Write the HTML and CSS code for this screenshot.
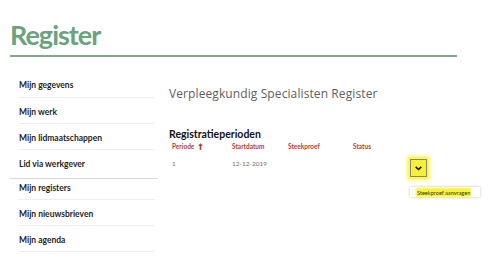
FILE: index.html
```html
<!DOCTYPE html>
<html lang="nl">
<head>
<meta charset="utf-8">
<title>Register</title>
<link rel="stylesheet" href="styles.css">
</head>
<body>
<header class="page-header">
  <h1 class="page-title">Register</h1>
</header>
<div class="layout">
  <nav class="sidebar">
    <a class="nav-item nav-item-first">Mijn gegevens</a>
    <a class="nav-item">Mijn werk</a>
    <a class="nav-item">Mijn lidmaatschappen</a>
    <a class="nav-item nav-item-tall">Lid via werkgever</a>
    <a class="nav-item nav-item-active">Mijn registers</a>
    <a class="nav-item">Mijn nieuwsbrieven</a>
    <a class="nav-item">Mijn agenda</a>
  </nav>
  <main class="content">
    <h2 class="register-name">Verpleegkundig Specialisten Register</h2>
    <h3 class="section-title">Registratieperioden</h3>
    <div class="table">
      <div class="row head">
        <div class="col c1">Periode <svg class="sort" viewBox="0 0 6 8" width="5" height="7"><path d="M3 0 L6 3.2 H4 V8 H2 V3.2 H0 Z" fill="#c0392b"/></svg></div>
        <div class="col c2">Startdatum</div>
        <div class="col c3">Steekproef</div>
        <div class="col c4">Status</div>
      </div>
      <div class="row body">
        <div class="col c1 num">1</div>
        <div class="col c2 date">12-12-2019</div>
        <div class="col c3"></div>
        <div class="col c4"></div>
        <div class="col c5">
          <div class="action">
            <button class="toggle" type="button">
              <svg viewBox="0 0 10 7" width="7" height="5"><path d="M1 1.2 L5 5 L9 1.2" fill="none" stroke="#111" stroke-width="2.2"/></svg>
            </button>
            <div class="menu"><span class="menu-item">Steekproef aanvragen</span></div>
          </div>
        </div>
      </div>
    </div>
  </main>
</div>
</body>
</html>
```

FILE: styles.css
```css
* { box-sizing: border-box; }
html, body { margin: 0; padding: 0; background: #fff; }
body {
  width: 500px;
  height: 259px;
  overflow: hidden;
  font-family: Lato, "Open Sans", sans-serif;
  color: #222;
}
.page-header {
  margin: 0 43px 0 10px;
  padding-top: 18px;
  border-bottom: 2px solid #7da98a;
  height: 57px;
}
.page-title {
  margin: 0;
  font-family: Lato, sans-serif;
  font-weight: 700;
  font-size: 27px;
  line-height: 34px;
  color: #6ba37d;
  letter-spacing: -1px;
}
.layout {
  display: flex;
  margin-top: 15px;
}
.sidebar {
  width: 149px;
  margin-left: 9px;
  display: flex;
  flex-direction: column;
}
.nav-item {
  display: flex;
  align-items: center;
  height: 26px;
  margin: 0 3px 0 10px;
  padding-top: 3px;
  border-bottom: 1px solid #eeeeee;
  font-size: 8.5px;
  font-weight: 700;
  color: #1e1e1e;
}
.nav-item-first { padding-top: 0; }
.nav-item-tall {
  height: 29px;
  margin: 0;
  padding: 0 0 0 10px;
  border-bottom: 1px solid #d8d8d8;
}
.nav-item-active { height: 21px; padding: 0 0 2px; }
.content {
  flex: 1;
  padding-left: 11px;
}
.register-name {
  margin: 14px 0 0;
  font-family: "Open Sans", sans-serif;
  font-weight: 400;
  font-size: 12px;
  line-height: 16px;
  color: #5e5e5e;
  letter-spacing: 0.1px;
}
.section-title {
  margin: 26px 0 0;
  font-size: 10.5px;
  line-height: 13px;
  font-weight: 700;
  color: #111;
}
.table { margin-top: 0; }
.row {
  display: flex;
  align-items: center;
  font-size: 6.5px;
}
.row.head { height: 10px; color: #c0392b; font-weight: 700; }
.row.body { height: 24px; }
.num { color: #b5574a; }
.date { color: #7b6a66; }
.col { padding-left: 3px; }
.c1 { width: 60px; display: flex; align-items: center; gap: 4px; }
.c2 { width: 56px; }
.c3 { width: 65px; }
.c4 { width: 57px; }
.c5 { flex: 1; }
.sort { display: block; }
.action { position: relative; width: 17px; margin-top: 10px; }
.toggle {
  display: flex;
  align-items: center;
  justify-content: center;
  width: 17px;
  height: 18px;
  padding: 0;
  border: 1px solid #8a8a6a;
  background: #f6f03a;
  box-shadow: 0 0 3px 3px #fbf650;
}
.menu {
  position: absolute;
  left: 0;
  top: 28px;
  width: 70px;
  height: 10px;
  background: #fff;
  box-shadow: 0 0 3px rgba(0,0,0,0.25);
  display: flex;
  align-items: center;
  padding-left: 7px;
}
.menu-item {
  font-size: 5.6px;
  color: #333;
  background: #f8f43c;
  box-shadow: 0 0 2px 1px #f8f43c;
  line-height: 7px;
}
```
